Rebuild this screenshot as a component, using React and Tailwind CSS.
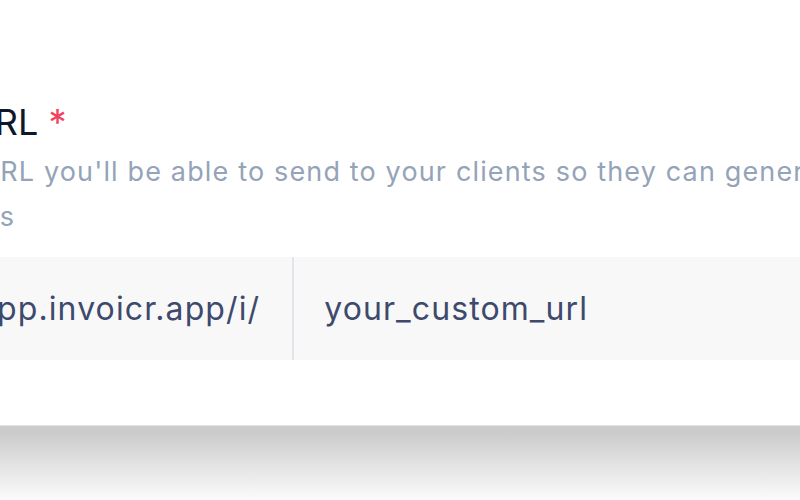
export default function App() {
  return (
    <div
      className="w-[800px] h-[500px] overflow-hidden bg-white flex flex-col"
      style={{ fontFamily: "Inter, 'Noto Sans', sans-serif" }}
    >
      {/* card */}
      <div className="h-[425px] bg-white pt-[95px] flex flex-col">
        {/* label */}
        <div className="ml-[-32px] whitespace-nowrap text-[36px] leading-[54px] font-normal text-[#0f172a]">
          URL <span className="text-[#f43f5e]">*</span>
        </div>

        {/* help text */}
        <p className="text-[27px] leading-[45px] tracking-[1.15px] text-[#94a3b8] whitespace-nowrap">
          <span className="block ml-[-21px]">
            URL you'll be able to send to your clients so they can generate
          </span>
          <span className="block ml-[-99px]">invoices</span>
        </p>

        {/* input group */}
        <div className="mt-[18px] ml-[-60px] w-[1000px] h-[103px] flex items-center bg-[#f8f8f9] text-[32px] tracking-[1.1px] text-[#3e4a6c]">
          <div className="h-full flex items-center pl-[38px] pr-[32px] border-r-2 border-[#e1e5ec] whitespace-nowrap">
            app.invoicr.app/i/
          </div>
          <div className="pl-[30px] whitespace-nowrap">your_custom_url</div>
        </div>
      </div>

      {/* window shadow */}
      <div className="flex-1 border-t border-[#e2e2e2] bg-linear-to-b from-[#cbcbcb] from-10% via-[#e4e4e4] via-55% to-[#fbfbfb]" />
    </div>
  );
}
